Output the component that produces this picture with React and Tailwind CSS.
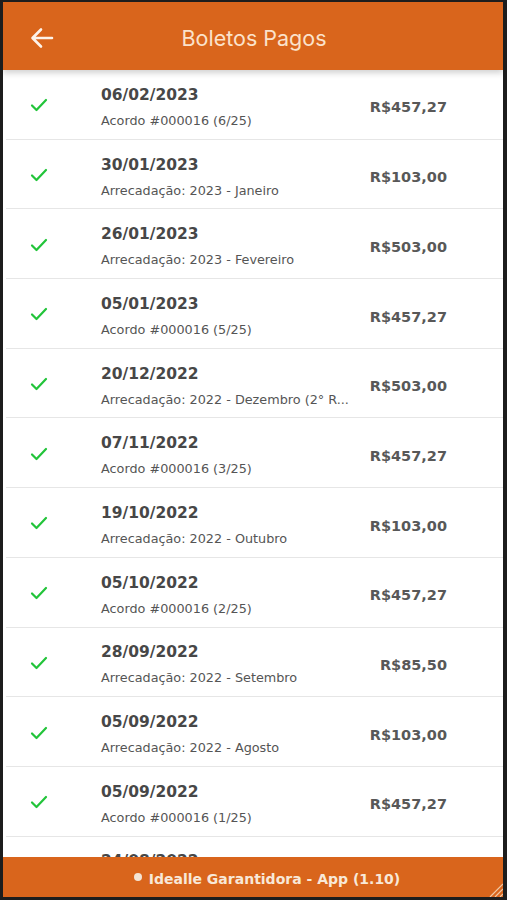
import React from "react";

const rows = [
  ["06/02/2023", "Acordo #000016 (6/25)", "R$457,27"],
  ["30/01/2023", "Arrecadação: 2023 - Janeiro", "R$103,00"],
  ["26/01/2023", "Arrecadação: 2023 - Fevereiro", "R$503,00"],
  ["05/01/2023", "Acordo #000016 (5/25)", "R$457,27"],
  ["20/12/2022", "Arrecadação: 2022 - Dezembro (2° R...", "R$503,00"],
  ["07/11/2022", "Acordo #000016 (3/25)", "R$457,27"],
  ["19/10/2022", "Arrecadação: 2022 - Outubro", "R$103,00"],
  ["05/10/2022", "Acordo #000016 (2/25)", "R$457,27"],
  ["28/09/2022", "Arrecadação: 2022 - Setembro", "R$85,50"],
  ["05/09/2022", "Arrecadação: 2022 - Agosto", "R$103,00"],
  ["05/09/2022", "Acordo #000016 (1/25)", "R$457,27"],
  ["24/08/2022", "Arrecadação: 2022 - Julho", "R$103,00"],
];

function Check() {
  return (
    <svg width="18" height="14" viewBox="0 0 18 14" fill="none">
      <polyline points="2,7.5 6.5,12 16,2" stroke="#22c43a" strokeWidth="2.2" strokeLinecap="round" strokeLinejoin="round" />
    </svg>
  );
}

export default function App() {
  return (
    <div className="w-[507px] h-[900px] bg-[#1d1d1d] pt-[2px] pl-[3px] pr-[4px] pb-[3px]">
      <div className="relative flex flex-col h-full overflow-hidden bg-white">
        <div className="relative z-10 h-[68px] shrink-0 bg-[#d9651c] flex items-center shadow-[0_3px_6px_rgba(0,0,0,0.18)]">
          <div className="absolute left-[27px] top-[25px]">
            <svg width="24" height="22" viewBox="0 0 24 22" fill="none">
              <path d="M22 11H3M11 2.5L2.5 11L11 19.5" stroke="#fdf3ea" strokeWidth="2.6" strokeLinecap="round" strokeLinejoin="round" />
            </svg>
          </div>
          <div className="w-full text-center text-[21.5px] text-[#fbe2cb] font-['Inter',sans-serif] font-normal pt-[4px] pl-[2px]">
            Boletos Pagos
          </div>
        </div>
        <div className="flex-1 overflow-hidden font-['DejaVu_Sans',sans-serif]">
          {rows.map((r, i) => (
            <div key={i} className="ml-[3px] h-[69.7px] border-b border-[#e6e6e6] flex items-center">
              <div className="w-[95px] pl-[24px] pt-[2px]">
                <Check />
              </div>
              <div className="flex-1 flex flex-col pt-[6px]">
                <div className="text-[15.5px] font-bold text-[#474747] leading-[20px]">{r[0]}</div>
                <div className="text-[12.8px] text-[#555555] leading-[18px] mt-[7px]">{r[1]}</div>
              </div>
              <div className="pr-[56px] text-[14.5px] font-bold text-[#585858] pt-[8px]">{r[2]}</div>
            </div>
          ))}
        </div>
        <div className="relative z-10 h-[40px] shrink-0 bg-[#d9651c] flex items-center justify-center gap-[7px] pt-[4px] pl-[28px] font-['DejaVu_Sans',sans-serif]">
          <span className="w-[8px] h-[8px] rounded-full bg-[#f4e4d4] mb-[4px]"></span>
          <span className="text-[14px] font-bold text-[#f8e8d8]">Idealle Garantidora - App (1.10)</span>
          <svg className="absolute right-0 bottom-0" width="16" height="16" viewBox="0 0 16 16">
            <path d="M16 3L3 16M16 8L8 16M16 13L13 16" stroke="#f0c9a6" strokeWidth="1.2" />
          </svg>
        </div>
      </div>
    </div>
  );
}
